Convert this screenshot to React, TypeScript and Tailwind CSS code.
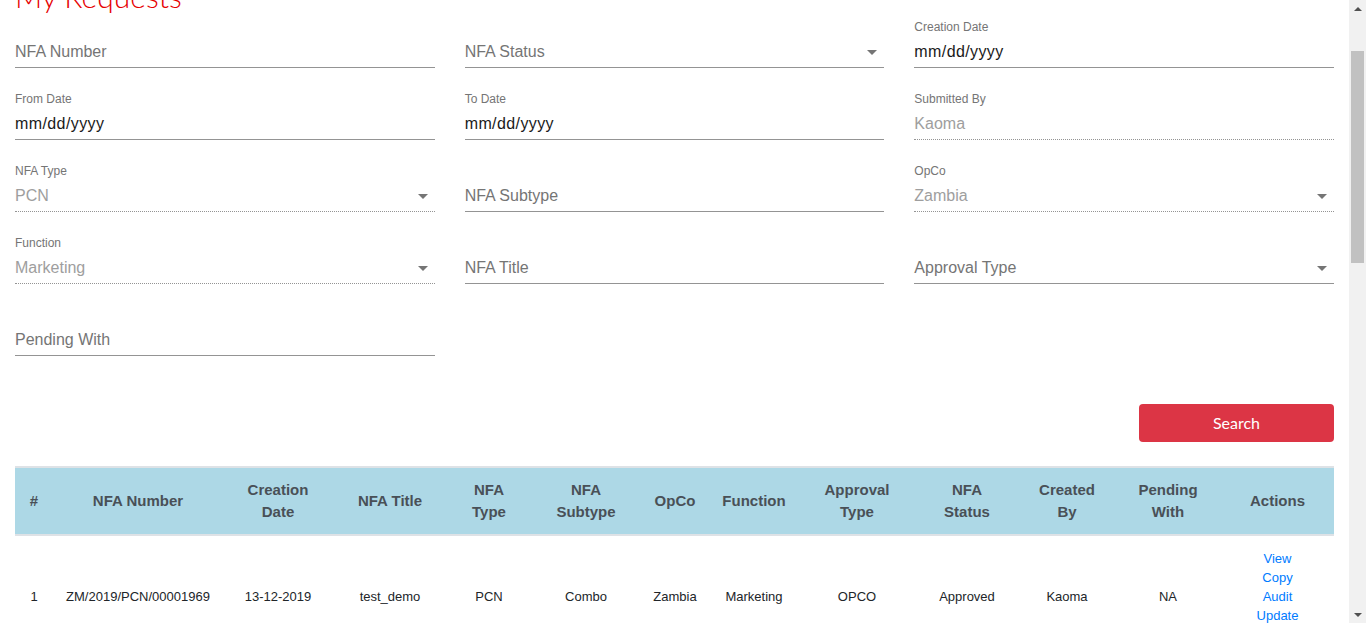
import { useLayoutEffect, useRef } from "react";

interface FieldProps {
  label?: string;
  text: string;
  kind: "placeholder" | "date" | "disabled";
  select?: boolean;
}

const Field = ({ label, text, kind, select }: FieldProps) => {
  const textColor =
    kind === "date" ? "text-[#1a1a1a]" : kind === "disabled" ? "text-[#9e9e9e]" : "text-[#757575]";
  return (
    <div className="flex flex-col">
      <div className="h-[18px] pt-px text-[12px] leading-[18px] text-[#757575]">{label}</div>
      <div
        className={`flex h-[33px] items-center justify-between border-b border-[#949494] pt-[2px] ${
          kind === "disabled" ? "border-dotted" : "border-solid"
        }`}
      >
        <span className={`text-[16px] ${textColor} ${kind === "date" ? "tracking-[0.4px]" : ""}`}>{text}</span>
        {select && (
          <span className="mr-[7px] h-0 w-0 border-x-[5px] border-t-[5px] border-x-transparent border-t-[#757575]" />
        )}
      </div>
    </div>
  );
};

const headers: { label: React.ReactNode; w: string }[] = [
  { label: "#", w: "w-[38px]" },
  { label: "NFA Number", w: "w-[170px]" },
  { label: <>Creation<br />Date</>, w: "w-[110px]" },
  { label: "NFA Title", w: "w-[114px]" },
  { label: <>NFA<br />Type</>, w: "w-[84px]" },
  { label: <>NFA<br />Subtype</>, w: "w-[110px]" },
  { label: "OpCo", w: "w-[68px]" },
  { label: "Function", w: "w-[90px]" },
  { label: <>Approval<br />Type</>, w: "w-[116px]" },
  { label: <>NFA<br />Status</>, w: "w-[104px]" },
  { label: <>Created<br />By</>, w: "w-[96px]" },
  { label: <>Pending<br />With</>, w: "w-[106px]" },
  { label: "Actions", w: "w-[113px]" },
];

const row = [
  "1",
  "ZM/2019/PCN/00001969",
  "13-12-2019",
  "test_demo",
  "PCN",
  "Combo",
  "Zambia",
  "Marketing",
  "OPCO",
  "Approved",
  "Kaoma",
  "NA",
];

const App = () => {
  const scrollRef = useRef<HTMLDivElement>(null);

  useLayoutEffect(() => {
    const el = scrollRef.current;
    if (!el) return;
    el.scrollTop = 100;
    const t = setTimeout(() => {
      el.scrollTop = 100;
    }, 50);
    return () => clearTimeout(t);
  }, []);

  return (
    <div className="flex h-screen bg-white font-['Liberation_Sans',Arial,sans-serif]">
      <div ref={scrollRef} className="flex-1 overflow-y-scroll [scrollbar-width:none]">
        <div className="min-h-[1731px] px-[15px] pt-[79px]">
          <h1 className="h-[35px] font-['Lato',sans-serif] text-[30px] leading-[35px] font-light text-[#e60000]">
            My Requests
          </h1>

          <div className="mt-[3px] grid grid-cols-3 gap-x-[30px] gap-y-[21px]">
            <Field text="NFA Number" kind="placeholder" />
            <Field text="NFA Status" kind="placeholder" select />
            <Field label="Creation Date" text="mm/dd/yyyy" kind="date" />

            <Field label="From Date" text="mm/dd/yyyy" kind="date" />
            <Field label="To Date" text="mm/dd/yyyy" kind="date" />
            <Field label="Submitted By" text="Kaoma" kind="disabled" />

            <Field label="NFA Type" text="PCN" kind="disabled" select />
            <Field text="NFA Subtype" kind="placeholder" />
            <Field label="OpCo" text="Zambia" kind="disabled" select />

            <Field label="Function" text="Marketing" kind="disabled" select />
            <Field text="NFA Title" kind="placeholder" />
            <Field text="Approval Type" kind="placeholder" select />

            <Field text="Pending With" kind="placeholder" />
          </div>

          <div className="mt-[48px] flex justify-end">
            <button className="h-[38px] w-[195px] rounded-[4px] bg-[#dc3545] font-['Lato',sans-serif] text-[16px] text-white">
              Search
            </button>
          </div>

          <table className="mt-[24px] w-full table-fixed border-collapse">
            <thead>
              <tr className="bg-[#add8e6]">
                {headers.map((h, i) => (
                  <th
                    key={i}
                    className={`${h.w} border-y-2 border-[#dee2e6] px-3 py-[11px] text-center align-middle text-[15px] leading-[22px] font-bold text-[#495057]`}
                  >
                    {h.label}
                  </th>
                ))}
              </tr>
            </thead>
            <tbody>
              <tr>
                {row.map((c, i) => (
                  <td key={i} className="px-3 pt-[13px] pb-3 text-center align-middle text-[13px] leading-[19px] text-[#212529]">
                    {c}
                  </td>
                ))}
                <td className="px-3 pt-[13px] pb-3 text-center align-middle text-[13px] leading-[19px] text-[#007bff]">
                  <div>View</div>
                  <div>Copy</div>
                  <div>Audit</div>
                  <div>Update</div>
                  <div>Withdraw</div>
                </td>
              </tr>
            </tbody>
          </table>
        </div>
      </div>

      {/* page scrollbar */}
      <div className="flex w-[17px] flex-col bg-[#f1f1f1]">
        <div className="flex h-[17px] items-center justify-center">
          <span className="h-0 w-0 border-x-[4px] border-b-[4px] border-x-transparent border-b-[#505050]" />
        </div>
        <div className="flex-1">
          <div className="mx-[2px] mt-[34px] h-[212px] bg-[#c1c1c1]" />
        </div>
        <div className="flex h-[17px] items-center justify-center">
          <span className="h-0 w-0 border-x-[4px] border-t-[4px] border-x-transparent border-t-[#505050]" />
        </div>
      </div>
    </div>
  );
};

export default App;
